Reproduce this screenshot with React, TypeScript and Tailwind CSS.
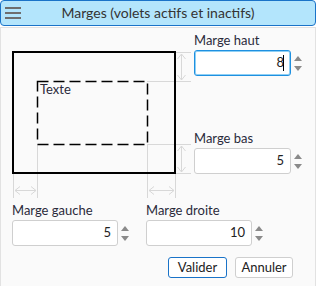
import React from 'react';

const FONT = { fontFamily: 'Lato, "Noto Sans", sans-serif' };

// petites flèches du spinner
function Spinner() {
  return (
    <div className="flex flex-col items-center justify-center gap-[5px] w-[10px] ml-[2px]">
      <svg width="8" height="5" viewBox="0 0 8 5">
        <path d="M0 5 L4 0 L8 5 Z" fill="#8a8a8a" />
      </svg>
      <svg width="8" height="5" viewBox="0 0 8 5">
        <path d="M0 0 L4 5 L8 0 Z" fill="#8a8a8a" />
      </svg>
    </div>
  );
}

function NumberField({ label, value, width, focused }: { label: string; value: string; width: string; focused?: boolean }) {
  return (
    <div className="flex flex-col">
      <div className="text-[13px] leading-[16px] text-[#2a2a3a] h-[16px]">{label}</div>
      <div className="flex items-stretch mt-[2px]">
        <div
          className={`${width} h-[26px] bg-white rounded-[3px] flex items-center justify-end pr-[6px] text-[13px] text-[#222] ${
            focused ? 'border border-[#1e90e0] shadow-[0_0_0_1px_#8fd0f5_inset]' : 'border border-[#cfcfcf]'
          }`}
        >
          <span>{value}</span>
          {focused && <span className="w-[1px] h-[16px] bg-black -ml-[1px]"></span>}
        </div>
        <Spinner />
      </div>
    </div>
  );
}

// schéma des marges
function Diagram() {
  const g = '#d8d8d8';
  return (
    <svg width="192" height="172" viewBox="0 0 192 172" className="shrink-0">
      {/* guides */}
      <g stroke={g} strokeWidth="1" fill="none">
        <line x1="174" y1="24.5" x2="190" y2="24.5" />
        <line x1="146" y1="53.5" x2="190" y2="53.5" />
        <line x1="146" y1="116.5" x2="190" y2="116.5" />
        <line x1="174" y1="145.5" x2="190" y2="145.5" />
        <line x1="12.5" y1="145" x2="12.5" y2="170" />
        <line x1="36.5" y1="116" x2="36.5" y2="170" />
        <line x1="146.5" y1="116" x2="146.5" y2="170" />
        <line x1="174.5" y1="145" x2="174.5" y2="170" />
        {/* flèches verticales */}
        <line x1="180.5" y1="26" x2="180.5" y2="52" />
        <path d="M176.5 31 L180.5 26 L184.5 31 M176.5 47 L180.5 52 L184.5 47" />
        <line x1="180.5" y1="118" x2="180.5" y2="144" />
        <path d="M176.5 123 L180.5 118 L184.5 123 M176.5 139 L180.5 144 L184.5 139" />
        {/* flèches horizontales */}
        <line x1="14" y1="162.5" x2="35" y2="162.5" />
        <path d="M19 158.5 L14 162.5 L19 166.5 M30 158.5 L35 162.5 L30 166.5" />
        <line x1="148" y1="162.5" x2="173" y2="162.5" />
        <path d="M153 158.5 L148 162.5 L153 166.5 M168 158.5 L173 162.5 L168 166.5" />
      </g>
      <rect x="12" y="24" width="162" height="121" fill="none" stroke="#000" strokeWidth="2" />
      <rect x="36.5" y="53.5" width="110" height="63" fill="none" stroke="#000" strokeWidth="1.5" strokeDasharray="11 5" />
      <text x="39" y="66" fontSize="13" fill="#2a2a3a" style={FONT}>Texte</text>
    </svg>
  );
}

export default function App() {
  return (
    <div className="w-[320px] h-[286px] bg-white overflow-hidden" style={FONT}>
      {/* barre de titre */}
      <div className="w-[316px] h-[26px] bg-[#b3e5fc] border border-[#1a73c8] rounded-[4px] flex items-center relative">
        <svg width="16" height="12" viewBox="0 0 16 12" className="absolute left-[4px] top-[6px]">
          <rect x="0" y="0" width="16" height="2" fill="#6e6e6e" />
          <rect x="0" y="5" width="16" height="2" fill="#6e6e6e" />
          <rect x="0" y="10" width="16" height="2" fill="#6e6e6e" />
        </svg>
        <div className="flex-1 text-center text-[14px] text-[#333] leading-[20px]">Marges (volets actifs et inactifs)</div>
      </div>

      {/* panneau */}
      <div className="w-[316px] h-[260px] mt-[1px] bg-[#fafafa] border border-[#e2e2e2]">
        <div className="flex">
          <Diagram />
          <div className="flex flex-col ml-[1px] pt-[4px]">
            <NumberField label="Marge haut" value="8" width="w-[97px]" focused />
            <div className="h-[54px]"></div>
            <NumberField label="Marge bas" value="5" width="w-[97px]" />
          </div>
        </div>
        <div className="flex pl-[11px] mt-[2px] gap-[16px]">
          <NumberField label="Marge gauche" value="5" width="w-[106px]" />
          <NumberField label="Marge droite" value="10" width="w-[106px]" />
        </div>
        <div className="flex justify-end gap-[8px] pr-[22px] mt-[11px]">
          <button className="w-[59px] h-[21px] bg-white border border-[#1a73c8] rounded-[3px] text-[13px] text-[#222] leading-none">Valider</button>
          <button className="w-[58px] h-[21px] bg-white border border-[#cfcfcf] rounded-[3px] text-[13px] text-[#222] leading-none">Annuler</button>
        </div>
      </div>
    </div>
  );
}
